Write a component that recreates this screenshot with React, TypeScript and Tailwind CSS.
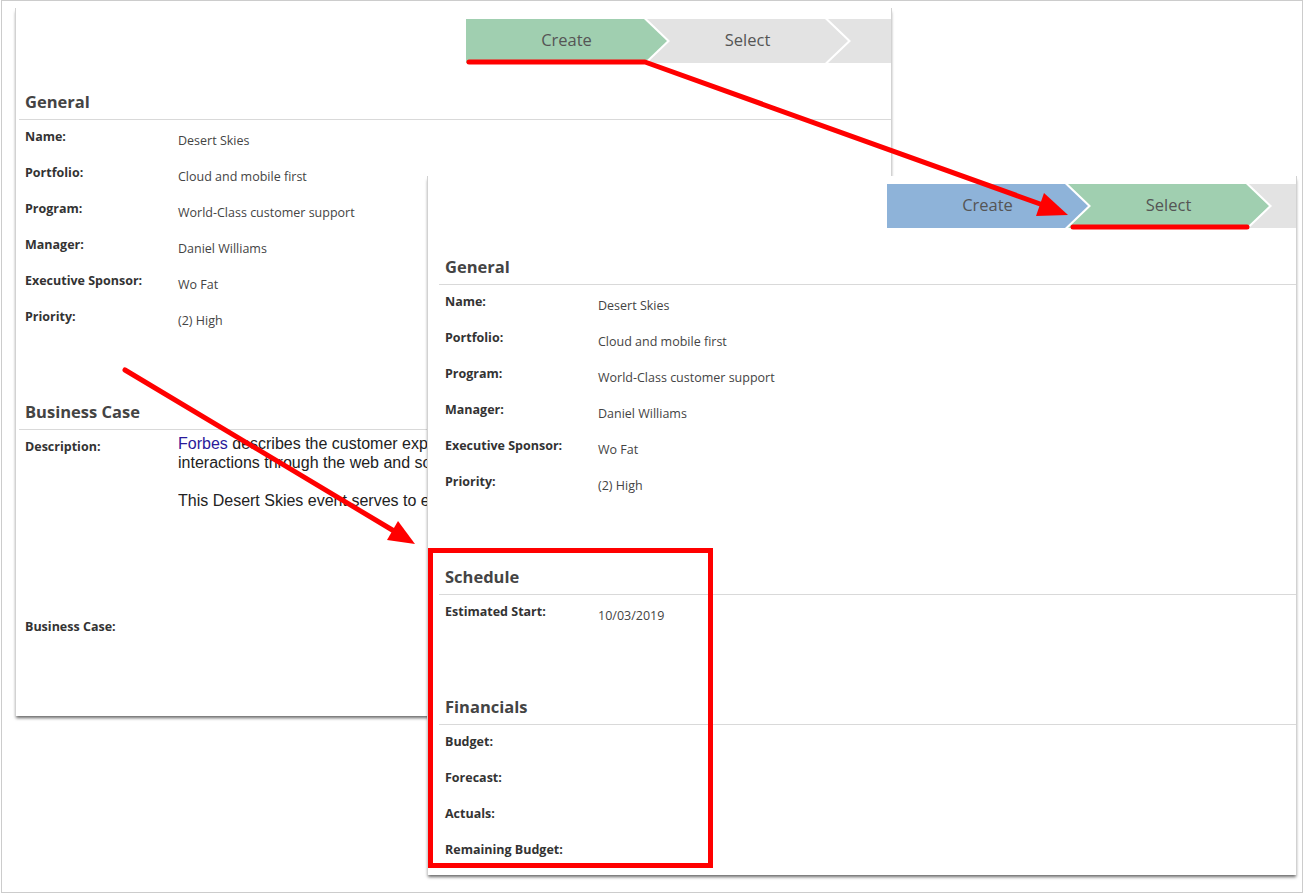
import React from 'react';

type Step = { label: string; bg: string };

const FONT = "font-['Open_Sans',sans-serif]";

const Stepper: React.FC<{ steps: Step[]; width: string }> = ({ steps, width }) => (
  <div className={`ml-auto flex h-[44px] ${width}`}>
    {steps.map((s, i) => {
      const shape =
        i === 0
          ? 'w-[201px] [clip-path:polygon(0_0,178px_0,100%_50%,178px_100%,0_100%)]'
          : i === steps.length - 1
          ? 'flex-1 -ml-[20px] [clip-path:polygon(0_0,100%_0,100%_100%,0_100%,23px_50%)]'
          : 'w-[201px] -ml-[20px] [clip-path:polygon(0_0,178px_0,100%_50%,178px_100%,0_100%,23px_50%)]';
      return (
        <div
          key={i}
          className={`${shape} ${s.bg} flex shrink-0 items-center justify-center pb-[2px] text-[16.5px] text-[#555]`}
        >
          {s.label}
        </div>
      );
    })}
  </div>
);

const Section: React.FC<{ title: string; first?: boolean; children: React.ReactNode }> = ({
  title,
  first,
  children,
}) => (
  <div className={first ? 'mt-[27px]' : 'mt-[64px]'}>
    <div className="border-b border-[#d9d9d9] px-[6px] pb-[5px] text-[16.5px] leading-[24px] font-bold text-[#444]">
      {title}
    </div>
    {children}
  </div>
);

const Row: React.FC<{ label: string; value?: React.ReactNode; tall?: boolean }> = ({ label, value, tall }) => (
  <div className={`flex px-[6px] ${tall ? 'h-[180px]' : 'h-[36px]'}`}>
    <div className="w-[153px] shrink-0 pt-[9px] text-[12.5px] leading-[16px] font-bold text-[#333]">{label}</div>
    {value !== undefined && (
      <div className={tall ? 'pt-[4px]' : 'pt-[13px] text-[12.5px] leading-[16px] text-[#444]'}>{value}</div>
    )}
  </div>
);

const general = [
  ['Name:', 'Desert Skies'],
  ['Portfolio:', 'Cloud and mobile first'],
  ['Program:', 'World-Class customer support'],
  ['Manager:', 'Daniel Williams'],
  ['Executive Sponsor:', 'Wo Fat'],
  ['Priority:', '(2) High'],
];

// only the part left of the front window is visible, so clip it there
const Description = () => (
  <div className="w-[249px] overflow-hidden font-['Liberation_Sans',Arial,sans-serif] text-[16px] leading-[19px] whitespace-nowrap text-[#222]">
    <p>
      <span className="text-[#2a1a9a]">Forbes</span> describes the customer expe
      <br />
      interactions through the web and so
    </p>
    <p className="mt-[19px]">This Desert Skies event serves to ex</p>
  </div>
);

export default function App() {
  return (
    <div className={`relative h-[894px] w-[1304px] overflow-hidden bg-white ${FONT}`}>
      {/* outer frame */}
      <div className="absolute top-0 left-[1px] h-[893px] w-[1302px] border border-[#cccccc]" />

      {/* back window */}
      <div className="absolute top-[8px] left-[15px] h-[708px] w-[877px] overflow-hidden border-x border-[#d2d2d2] bg-white pl-[3px] shadow-[0_3px_3px_-1px_rgba(0,0,0,0.6)]">
        <div className="pt-[11px]">
          <Stepper
            width="w-[425px]"
            steps={[
              { label: 'Create', bg: 'bg-[#a0cfb0]' },
              { label: 'Select', bg: 'bg-[#e3e3e3]' },
              { label: '', bg: 'bg-[#e3e3e3]' },
            ]}
          />
        </div>
        <Section title="General" first>
          {general.map(([l, v]) => (
            <Row key={l} label={l} value={v} />
          ))}
        </Section>
        <Section title="Business Case">
          <Row label="Description:" value={<Description />} tall />
          <Row label="Business Case:" />
        </Section>
      </div>

      {/* front window */}
      <div className="absolute top-[176px] left-[427px] h-[699px] w-[870px] overflow-hidden border-x border-[#d2d2d2] bg-white pl-[11px] shadow-[0_3px_3px_-1px_rgba(0,0,0,0.6)]">
        <div className="pt-[8px]">
          <Stepper
            width="w-[409px]"
            steps={[
              { label: 'Create', bg: 'bg-[#8eb3d9]' },
              { label: 'Select', bg: 'bg-[#a0cfb0]' },
              { label: '', bg: 'bg-[#e3e3e3]' },
            ]}
          />
        </div>
        <Section title="General" first>
          {general.map(([l, v]) => (
            <Row key={l} label={l} value={v} />
          ))}
        </Section>
        <Section title="Schedule">
          <Row label="Estimated Start:" value="10/03/2019" />
        </Section>
        <Section title="Financials">
          <Row label="Budget:" />
          <Row label="Forecast:" />
          <Row label="Actuals:" />
          <Row label="Remaining Budget:" />
        </Section>
      </div>

      {/* annotations */}
      <div className="absolute top-[548px] left-[428px] h-[320px] w-[285px] border-[5px] border-[#ff0000]" />
      <svg className="pointer-events-none absolute inset-0" width="1304" height="894">
        <g stroke="#ff0000" strokeWidth="5" fill="none" strokeLinecap="round" strokeLinejoin="round">
          <polyline points="469,62 645,62 1043,205" />
          <line x1="1073" y1="227" x2="1247" y2="227" />
          <line x1="125" y1="370" x2="394" y2="531" />
        </g>
        <polygon points="1068,215 1036,216 1044,193" fill="#ff0000" />
        <polygon points="415,544 387,540 398,521" fill="#ff0000" />
      </svg>
    </div>
  );
}
